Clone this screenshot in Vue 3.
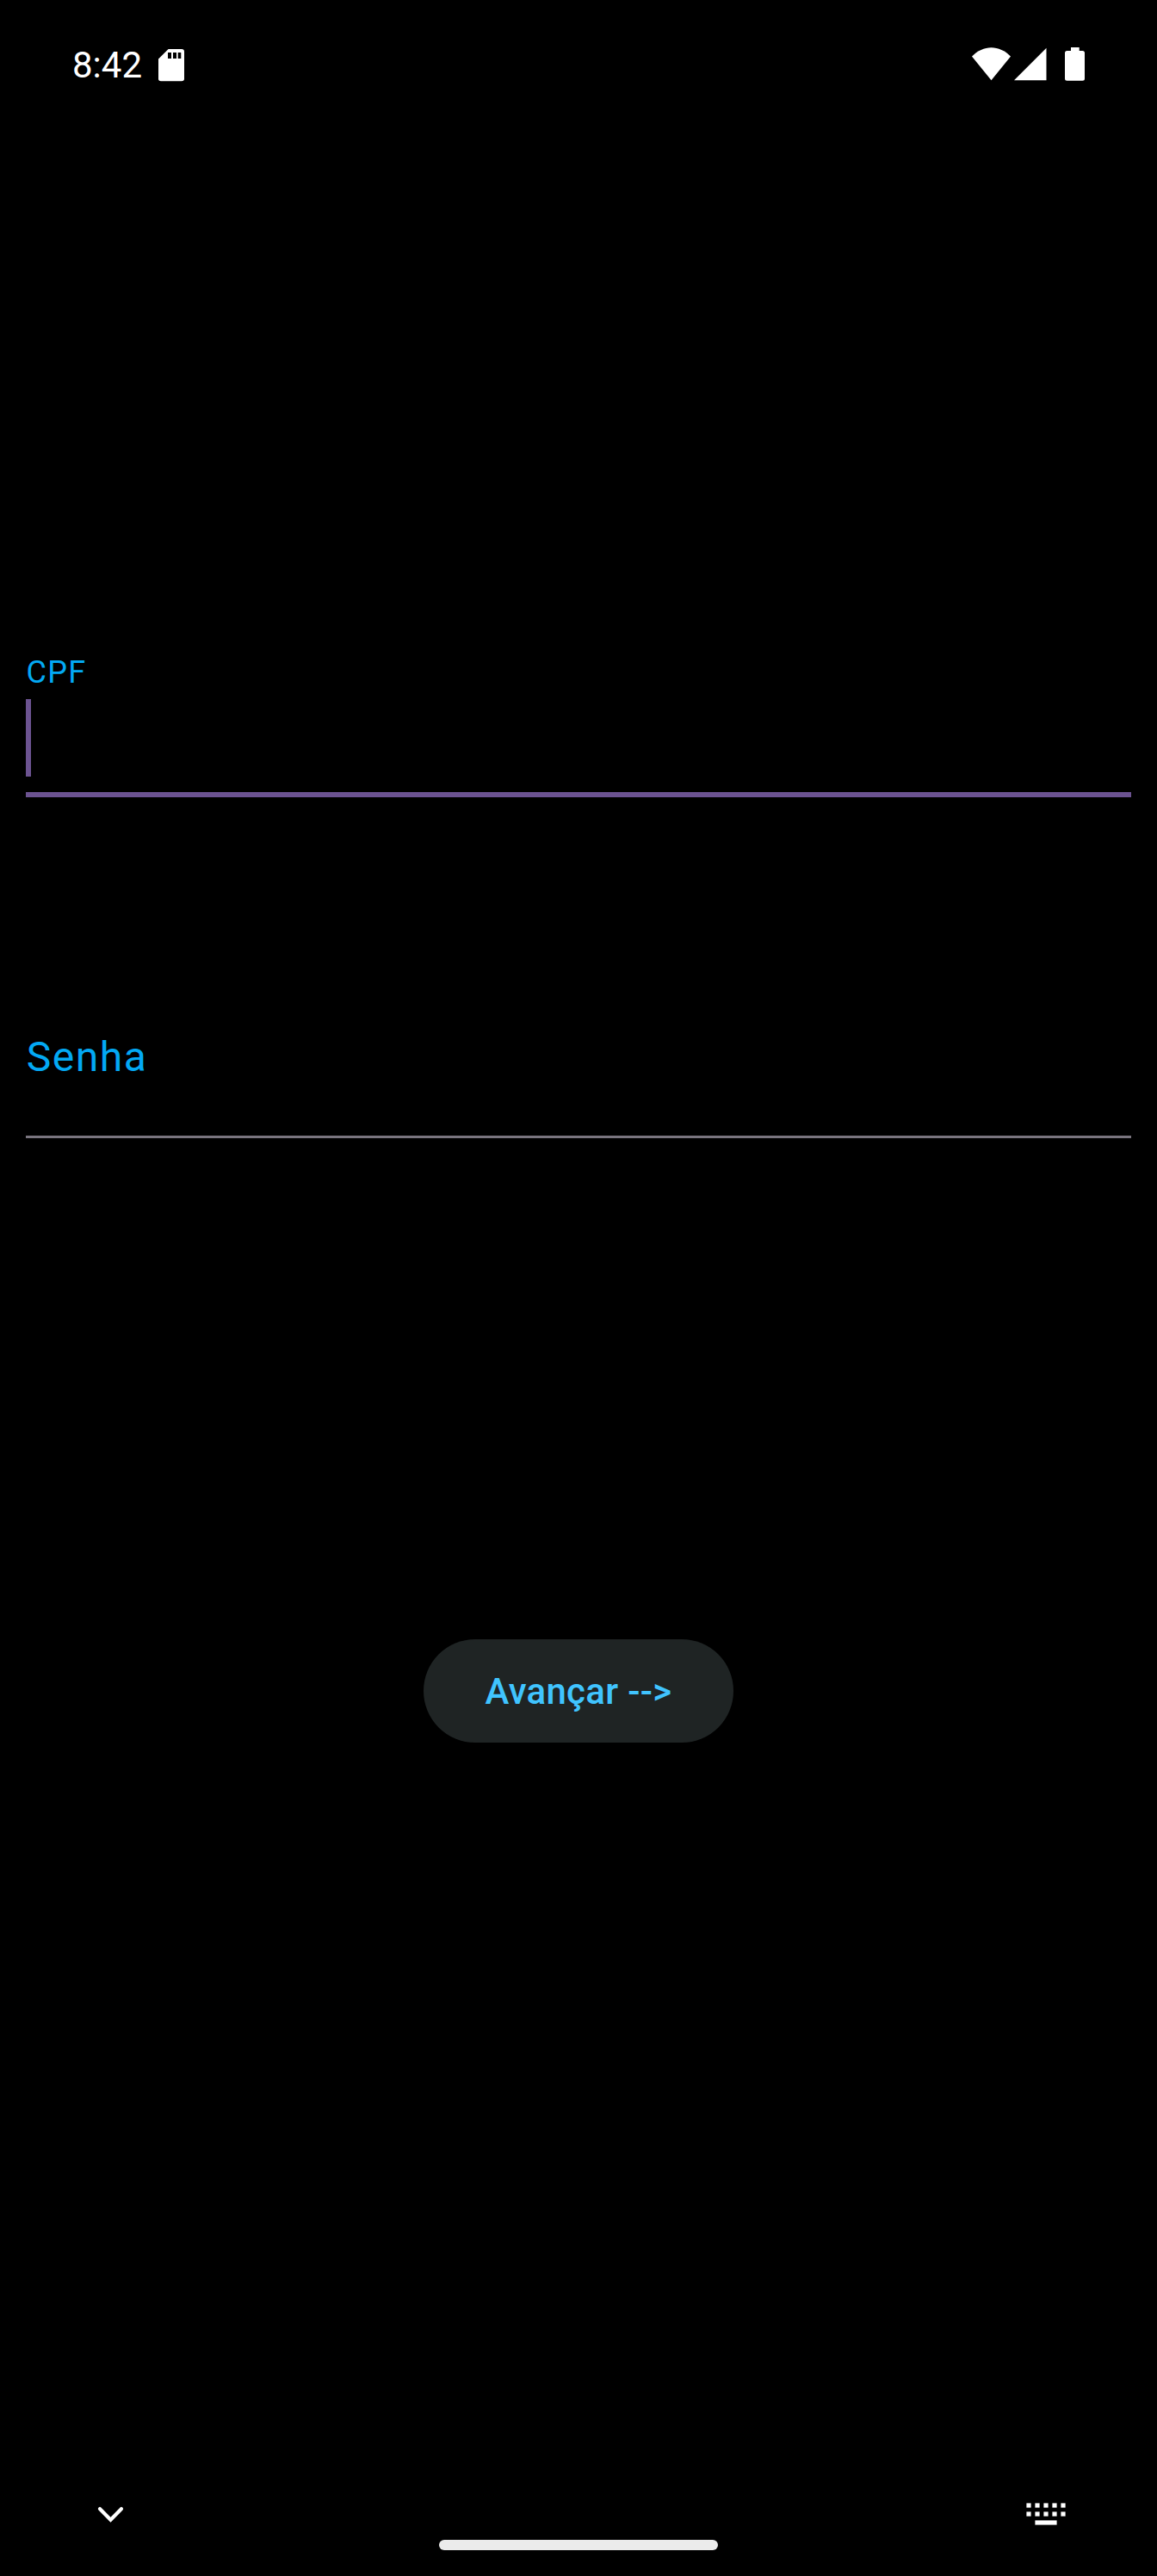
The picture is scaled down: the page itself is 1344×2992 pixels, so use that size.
<script setup>
import { ref } from 'vue'

const time = ref('8:42')
const keyColumns = [0, 10, 20, 30, 40]
const keyRows = [0, 10]
</script>

<template>
  <main class="screen">
    <header class="status-bar">
      <div class="status-start">
        <span class="clock">{{ time }}</span>
        <svg class="sd-card" width="30" height="38" viewBox="0 0 30 38">
          <path fill="#fff" fill-rule="evenodd" d="M11.6 0H27Q30 0 30 3V34.5Q30 37.3 27 37.3H3Q0 37.3 0 34.5V11.6ZM11 4V11H15V4ZM17 4V11H21V4ZM22.7 4V11H26.3V4Z" />
        </svg>
      </div>
      <div class="status-end">
        <svg class="wifi" width="46" height="39" viewBox="0 0 46 39">
          <path fill="#fff" d="M0 10.5C6.5 4 14.5.3 22.5.3S38.500 4 45 10.500L22.500 38.200Z" />
        </svg>
        <svg class="signal" width="38" height="39" viewBox="0 0 38 39">
          <path fill="#fff" d="M0 38.300L37.500 .8V38.300Z" />
        </svg>
        <svg class="battery" width="23" height="39" viewBox="0 0 23 39">
          <path fill="#fff" d="M7 0H16.700V4H20.500Q23 4 23 6.500V36.200Q23 38.700 20.500 38.700H2.500Q0 38.700 0 36.200V6.500Q0 4 2.500 4H7Z" />
        </svg>
      </div>
    </header>

    <section class="form">
      <div class="field field-focused">
        <label class="label-small">CPF</label>
        <span class="caret"></span>
      </div>
      <div class="field field-idle">
        <label class="label-large">Senha</label>
      </div>
      <button class="submit" type="button">Avançar --&gt;</button>
    </section>

    <footer class="nav-bar">
      <svg class="chevron" width="32" height="20" viewBox="0 0 32 20">
        <path d="M3 3.100L15.500 15.700L28 3.100" fill="none" stroke="#fff" stroke-width="4.200" stroke-linecap="round" />
      </svg>
      <span class="handle"></span>
      <svg class="keyboard" width="46" height="27" viewBox="0 0 46 27">
        <g fill="#fff">
          <template v-for="y in keyRows" :key="y">
            <rect v-for="x in keyColumns" :key="x" :x="x + 0.4" :y="y + 0.4" width="5.200" height="5.200" />
          </template>
          <rect x="10.400" y="20.400" width="25.200" height="5.200" />
        </g>
      </svg>
    </footer>
  </main>
</template>

<style>
body {
  margin: 0;
  background: #000;
}
</style>

<style scoped>
.screen {
  display: flex;
  flex-direction: column;
  box-sizing: border-box;
  width: 1344px;
  height: 2992px;
  overflow: hidden;
  background: #000;
  font-family: Roboto, sans-serif;
}

svg {
  display: block;
  flex: none;
}

.status-bar {
  display: flex;
  justify-content: space-between;
  box-sizing: border-box;
  height: 150px;
  padding: 51px 84px 0;
}

.status-start,
.status-end {
  display: flex;
  align-items: flex-start;
}

.clock {
  width: 100px;
  color: #fff;
  font-size: 42px;
  line-height: 50px;
}

.sd-card {
  margin-top: 6px;
}

.status-end {
  padding-top: 4px;
}

.signal {
  margin-left: 3px;
}

.battery {
  margin-left: 21px;
}

.form {
  display: flex;
  flex: 1;
  flex-direction: column;
  padding: 609px 30px 0;
}

.field {
  display: flex;
  flex-direction: column;
  box-sizing: border-box;
  color: #03a9f4;
}

.field-focused {
  height: 167px;
  border-bottom: 6px solid #6c5391;
}

.label-small {
  padding-left: 0.6px;
  font-size: 36px;
  line-height: 44px;
  letter-spacing: 1.2px;
}

.caret {
  width: 6px;
  height: 90px;
  margin-top: 9px;
  background: #6c5391;
}

.field-idle {
  height: 124px;
  margin-top: 272px;
  border-bottom: 3px solid #79747e;
}

.label-large {
  padding-left: 0.75px;
  font-size: 48px;
  line-height: 60px;
  letter-spacing: 1.5px;
}

.submit {
  align-self: center;
  width: 360px;
  height: 120px;
  margin-top: 582px;
  padding: 2px 0 0;
  border: 0;
  border-radius: 60px;
  background: #1f2424;
  color: #40c4ff;
  font-family: inherit;
  font-size: 42px;
  font-weight: 500;
  line-height: 60px;
  letter-spacing: 0.3px;
}

.nav-bar {
  display: flex;
  align-items: flex-start;
  justify-content: space-between;
  box-sizing: border-box;
  height: 92px;
  padding: 7px 106px 0 113px;
}

.chevron {
  margin-top: 4px;
}

.handle {
  width: 324px;
  height: 12px;
  margin-top: 43px;
  margin-left: 7px;
  border-radius: 6px;
  background: #ebebeb;
}
</style>
